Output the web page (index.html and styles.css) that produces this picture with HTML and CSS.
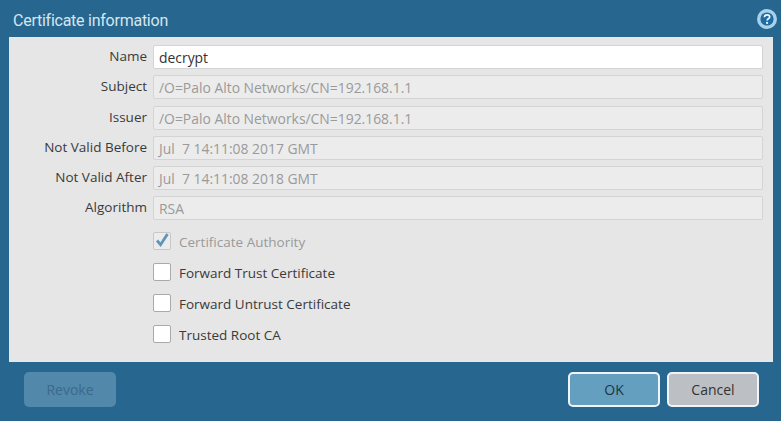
FILE: index.html
```html
<!DOCTYPE html>
<html lang="en">
<head>
    <meta charset="UTF-8">
    <title>Certificate information</title>
    <link rel="stylesheet" href="styles.css">
</head>
<body>
    <div class="dialog">
        <div class="title-bar">
            <h1>Certificate information</h1>
            <svg class="help" width="20" height="20" viewBox="0 0 20 20">
                <circle cx="10" cy="10" r="10" fill="#a9d2ea"/>
                <circle cx="10" cy="10" r="6.6" fill="#1f6ca3"/>
                <path d="M7.4 8.3c0-1.6 1.2-2.5 2.7-2.5s2.6.8 2.6 2.1c0 1.9-2.6 1.9-2.6 3.6" fill="none" stroke="#eef7fc" stroke-width="1.7"/>
                <circle cx="10.1" cy="13.9" r="1.1" fill="#eef7fc"/>
            </svg>
        </div>
        <div class="panel">
            <div class="row">
                <label>Name</label>
                <div class="field editable">decrypt</div>
            </div>
            <div class="row">
                <label>Subject</label>
                <div class="field">/O=Palo Alto Networks/CN=192.168.1.1</div>
            </div>
            <div class="row">
                <label>Issuer</label>
                <div class="field">/O=Palo Alto Networks/CN=192.168.1.1</div>
            </div>
            <div class="row">
                <label>Not Valid Before</label>
                <div class="field">Jul&nbsp; 7 14:11:08 2017 GMT</div>
            </div>
            <div class="row">
                <label>Not Valid After</label>
                <div class="field">Jul&nbsp; 7 14:11:08 2018 GMT</div>
            </div>
            <div class="row">
                <label>Algorithm</label>
                <div class="field">RSA</div>
            </div>
            <div class="checks">
                <div class="check disabled">
                    <span class="box">
                        <svg width="18" height="18" viewBox="0 0 18 18">
                            <path d="M4 8.5l3.6 4.2L14.5 2" fill="none" stroke="#5f95b8" stroke-width="2.8"/>
                        </svg>
                    </span>
                    Certificate Authority
                </div>
                <div class="check"><span class="box"></span>Forward Trust Certificate</div>
                <div class="check"><span class="box"></span>Forward Untrust Certificate</div>
                <div class="check"><span class="box"></span>Trusted Root CA</div>
            </div>
        </div>
        <div class="footer">
            <button class="btn revoke">Revoke</button>
            <div class="actions">
                <button class="btn ok">OK</button>
                <button class="btn cancel">Cancel</button>
            </div>
        </div>
    </div>
</body>
</html>
```

FILE: styles.css
```css
html, body {
    margin: 0;
    height: 100%;
}
body {
    font-family: "Open Sans", "Noto Sans", sans-serif;
    font-size: 13.5px;
    color: #3a3a3a;
    overflow: hidden;
}
.dialog {
    height: 421px;
    background-color: #27668f;
    display: flex;
    flex-direction: column;
    padding: 0 8px 0 9px;
    box-sizing: border-box;
}
.title-bar {
    height: 37px;
    display: flex;
    align-items: center;
    justify-content: space-between;
    padding: 3px 0 0 4px;
    box-sizing: border-box;
}
h1 {
    margin: 0;
    font-family: Roboto, sans-serif;
    font-size: 16px;
    font-weight: 400;
    letter-spacing: -0.25px;
    color: #d4e6f1;
}
.help {
    margin-right: -4px;
    margin-top: -3px;
}
.panel {
    height: 325px;
    box-sizing: border-box;
    background-color: #e6e6e6;
    border-top: 1px solid #dcebf3;
    border-left: 1px solid #dcebf3;
    border-bottom: 1px solid #dcebf3;
    padding: 7px 10px 0 0;
}
.row {
    display: flex;
    align-items: center;
    height: 24px;
    margin-bottom: 6.3px;
}
.row label {
    width: 137px;
    text-align: right;
    padding: 0 6px 2px 0;
    flex-shrink: 0;
}
.field {
    flex: 1;
    height: 24px;
    box-sizing: border-box;
    line-height: 23px;
    padding-left: 5px;
    font-size: 13.9px;
    border: 1px solid #d4d4d4;
    border-radius: 2px;
    background-color: #ececec;
    color: #9a9a9a;
}
.field.editable {
    background-color: #fff;
    color: #333;
}
.checks {
    padding-left: 143px;
}
.check {
    display: flex;
    align-items: center;
    height: 31px;
    gap: 8px;
}
.check.disabled {
    color: #9a9a9a;
}
.box {
    width: 18px;
    height: 18px;
    box-sizing: border-box;
    background-color: #fff;
    border: 1px solid #aaa;
    border-radius: 2px;
    display: flex;
    margin-top: -2px;
}
.disabled .box {
    background-color: #ececec;
    border-color: #c8c8c8;
}
.box svg {
    flex-shrink: 0;
    margin: -1px;
}
.footer {
    flex: 1;
    display: flex;
    align-items: center;
    justify-content: space-between;
    padding: 0 14px 5px 15px;
}
.actions {
    display: flex;
    gap: 7px;
}
.btn {
    font-family: "Open Sans", "Noto Sans", sans-serif;
    font-size: 14px;
    height: 35px;
    width: 92px;
    border-radius: 5px;
    box-sizing: border-box;
    border: 2px solid #eef4f7;
    color: #1f3444;
}
.revoke {
    background-color: #5288a9;
    border: none;
    color: #3a6a8c;
}
.ok {
    background-color: #659fc0;
}
.cancel {
    background-color: #bcc0c5;
    color: #333;
}
```
